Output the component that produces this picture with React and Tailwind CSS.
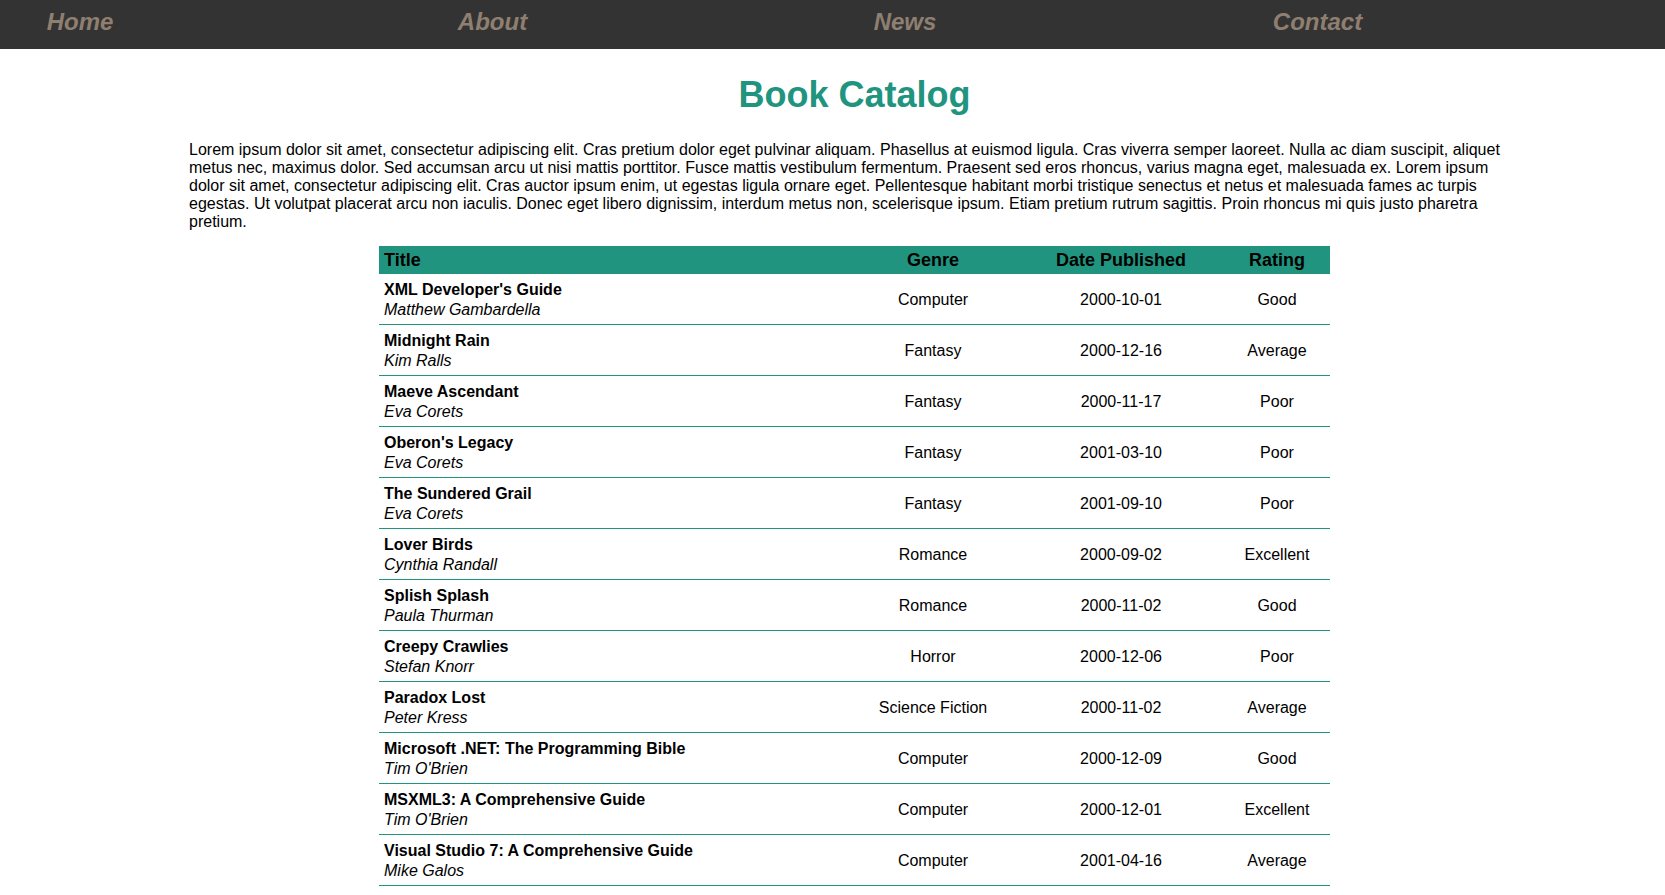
import React from "react";

const books = [
  { title: "XML Developer's Guide", author: "Matthew Gambardella", genre: "Computer", date: "2000-10-01", rating: "Good" },
  { title: "Midnight Rain", author: "Kim Ralls", genre: "Fantasy", date: "2000-12-16", rating: "Average" },
  { title: "Maeve Ascendant", author: "Eva Corets", genre: "Fantasy", date: "2000-11-17", rating: "Poor" },
  { title: "Oberon's Legacy", author: "Eva Corets", genre: "Fantasy", date: "2001-03-10", rating: "Poor" },
  { title: "The Sundered Grail", author: "Eva Corets", genre: "Fantasy", date: "2001-09-10", rating: "Poor" },
  { title: "Lover Birds", author: "Cynthia Randall", genre: "Romance", date: "2000-09-02", rating: "Excellent" },
  { title: "Splish Splash", author: "Paula Thurman", genre: "Romance", date: "2000-11-02", rating: "Good" },
  { title: "Creepy Crawlies", author: "Stefan Knorr", genre: "Horror", date: "2000-12-06", rating: "Poor" },
  { title: "Paradox Lost", author: "Peter Kress", genre: "Science Fiction", date: "2000-11-02", rating: "Average" },
  { title: "Microsoft .NET: The Programming Bible", author: "Tim O'Brien", genre: "Computer", date: "2000-12-09", rating: "Good" },
  { title: "MSXML3: A Comprehensive Guide", author: "Tim O'Brien", genre: "Computer", date: "2000-12-01", rating: "Excellent" },
  { title: "Visual Studio 7: A Comprehensive Guide", author: "Mike Galos", genre: "Computer", date: "2001-04-16", rating: "Average" },
];

const links = ["Home", "About", "News", "Contact"];

export default function App() {
  return (
    <div className="min-h-screen bg-white font-['Liberation_Sans',Arial,sans-serif] text-black">
      {/* top menu */}
      <nav className="h-[49px] bg-[#333333]">
        <ul className="flex gap-[252.5px] pt-[8px]">
          {links.map((l) => (
            <li key={l} className="w-[160px] text-center">
              <a href="#" className="text-[24px] leading-[28px] font-bold italic text-[#8e7f70]">
                {l}
              </a>
            </li>
          ))}
        </ul>
      </nav>

      <main className="ml-[189px] w-[1331px] pb-[10px]">
        <h1 className="mt-[26px] text-center text-[36px] leading-[40px] font-bold text-[#20947f]">
          Book Catalog
        </h1>

        <p className="mt-[26px] text-[16px] leading-[18px]">
          Lorem ipsum dolor sit amet, consectetur adipiscing elit. Cras pretium dolor eget pulvinar aliquam. Phasellus at
          euismod ligula. Cras viverra semper laoreet. Nulla ac diam suscipit, aliquet metus nec, maximus dolor. Sed
          accumsan arcu ut nisi mattis porttitor. Fusce mattis vestibulum fermentum. Praesent sed eros rhoncus, varius
          magna eget, malesuada ex. Lorem ipsum dolor sit amet, consectetur adipiscing elit. Cras auctor ipsum enim, ut
          egestas ligula ornare eget. Pellentesque habitant morbi tristique senectus et netus et malesuada fames ac turpis
          egestas. Ut volutpat placerat arcu non iaculis. Donec eget libero dignissim, interdum metus non, scelerisque
          ipsum. Etiam pretium rutrum sagittis. Proin rhoncus mi quis justo pharetra pretium.
        </p>

        {/* catalog table */}
        <table className="mx-auto mt-[15px] w-[951px] table-fixed border-collapse text-[16px] leading-[20px]">
          <colgroup>
            <col className="w-[469px]" />
            <col className="w-[170px]" />
            <col className="w-[206px]" />
            <col className="w-[106px]" />
          </colgroup>
          <thead>
            <tr className="bg-[#20947f] text-[18px] leading-[21px]">
              <th className="px-[5px] pt-[4px] pb-[3px] text-left font-bold">Title</th>
              <th className="px-[5px] pt-[4px] pb-[3px] text-center font-bold">Genre</th>
              <th className="px-[5px] pt-[4px] pb-[3px] text-center font-bold">Date Published</th>
              <th className="px-[5px] pt-[4px] pb-[3px] text-center font-bold">Rating</th>
            </tr>
          </thead>
          <tbody>
            {books.map((b) => (
              <tr key={b.title} className="border-b border-[#20947f]">
                <td className="px-[5px] pt-[6px] pb-[4px]">
                  <div className="font-bold">{b.title}</div>
                  <div className="italic">{b.author}</div>
                </td>
                <td className="px-[5px] pt-[6px] pb-[4px] text-center">{b.genre}</td>
                <td className="px-[5px] pt-[6px] pb-[4px] text-center">{b.date}</td>
                <td className="px-[5px] pt-[6px] pb-[4px] text-center">{b.rating}</td>
              </tr>
            ))}
          </tbody>
        </table>
      </main>
    </div>
  );
}
